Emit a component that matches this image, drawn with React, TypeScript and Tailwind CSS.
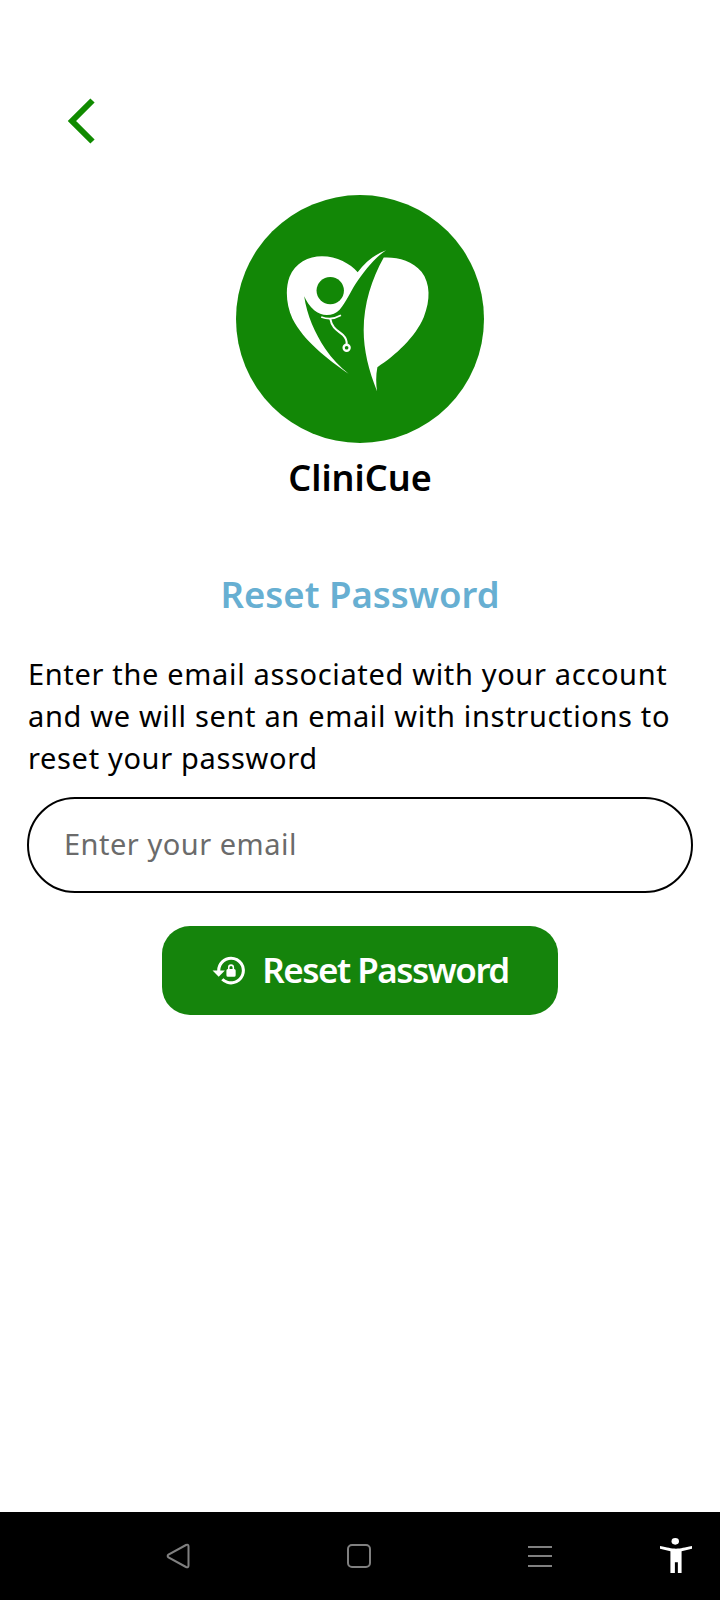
const Logo = () => (
    <svg viewBox="48 45 742 742" className="w-[248px] h-[248px]">
        <circle cx="419" cy="416" r="371" fill="#128706" />
        <path
            fill="#fff"
            d="M385 580 C320 535 250 480 217 415 C198 375 195 325 208 290 C225 248 265 228 305 228 C350 228 390 250 412 276 C435 245 465 222 497 210 C460 235 430 275 405 312 C390 335 378 365 358 388 C340 408 305 410 282 390 C268 378 258 362 252 348 C260 405 285 460 315 505 C335 535 360 560 385 580 Z"
        />
        <circle cx="330" cy="331" r="41" fill="#128706" />
        <path
            fill="#fff"
            d="M490 232 C530 230 575 240 603 275 C630 310 630 360 610 410 C585 470 525 525 471 560 C466 585 467 610 470 632 C445 570 430 510 430 450 C430 370 455 295 490 232 Z"
        />
        <path d="M303 410 C322 417 345 415 362 405" fill="none" stroke="#fff" strokeWidth="5" />
        <path d="M330 415 C335 445 355 452 368 464 C378 474 380 482 379 492" fill="none" stroke="#fff" strokeWidth="6" />
        <circle cx="379" cy="502" r="9" fill="none" stroke="#fff" strokeWidth="7" />
    </svg>
);

const LockReset = () => (
    <svg viewBox="0 0 24 24" fill="#fff" className="w-[37px] h-[37px]">
        <path d="M13 3a9 9 0 0 0-9 9H1l4 4 4-4H6a7 7 0 1 1 2.05 4.95l-1.42 1.42A9 9 0 1 0 13 3z" />
        <path d="M15 11v-1a2 2 0 0 0-4 0v1a1 1 0 0 0-1 1v3a1 1 0 0 0 1 1h4a1 1 0 0 0 1-1v-3a1 1 0 0 0-1-1zm-1 0h-2v-1a1 1 0 0 1 2 0v1z" />
    </svg>
);

const App = () => {
    return (
        <div className="w-[720px] h-[1600px] bg-white flex flex-col font-['Noto_Sans',sans-serif] text-black">
            <div className="flex-1 flex flex-col">
                <button className="ml-[64px] mt-[96px] w-[36px] h-[50px] flex items-center">
                    <svg viewBox="0 0 36 50" className="w-[36px] h-[50px]">
                        <path d="M28.5 4.5 L8 25 L28.5 45.5" fill="none" stroke="#108a00" strokeWidth="6" />
                    </svg>
                </button>
                <div className="mt-[49px] flex justify-center">
                    <Logo />
                </div>
                <h1 className="mt-[10px] text-center text-[36px] leading-[50px] font-semibold">CliniCue</h1>
                <h2 className="mt-[66px] text-center text-[36.5px] leading-[50px] font-semibold text-[#67afd2]">Reset Password</h2>
                <p className="mt-[34px] mx-[28px] text-[29px] leading-[42px] tracking-[0.66px]">
                    Enter the email associated with your account and we will sent an email with instructions to reset your password
                </p>
                <div className="mt-[18px] mx-[27px] h-[96px] border-2 border-black rounded-[48px] flex items-center pl-[35px] pb-[2px] text-[29px] text-[#6b6b6b] tracking-[0.5px]">
                    Enter your email
                </div>
                <button className="mt-[33px] self-center w-[396px] h-[89px] bg-[#15840c] rounded-[28px] flex items-center justify-center gap-[14px] text-white text-[35px] tracking-[-1.5px] font-semibold">
                    <LockReset />
                    Reset Password
                </button>
            </div>
            <div className="h-[88px] bg-black relative flex items-center justify-center gap-[157px]">
                <svg viewBox="0 0 24 26" className="w-[24px] h-[26px] -ml-[2px]">
                    <path d="M20 2 Q22.5 0.8 22.5 3.5 V22.5 Q22.5 25.2 20 24 L2.5 14.5 Q0.8 13 2.5 11.5 Z" fill="none" stroke="#808080" strokeWidth="2" />
                </svg>
                <div className="w-[24px] h-[24px] border-2 border-[#808080] rounded-[5px]"></div>
                <div className="w-[24px] h-[21px] flex flex-col justify-between">
                    <div className="h-[2px] bg-[#808080]"></div>
                    <div className="h-[2px] bg-[#808080]"></div>
                    <div className="h-[2px] bg-[#808080]"></div>
                </div>
                <svg viewBox="0 0 86 105" fill="#fff" preserveAspectRatio="none" className="absolute left-[660px] top-[26px] w-[32px] h-[35px]">
                    <circle cx="41" cy="10" r="10" />
                    <path d="M0 24 C20 28 30 32 43 32 C56 32 66 28 86 24 L86 32 L58 40 L58 105 L48 105 L48 73 L40 73 L40 105 L28 105 L28 40 L0 32 Z" />
                </svg>
            </div>
        </div>
    );
};

export default App;
